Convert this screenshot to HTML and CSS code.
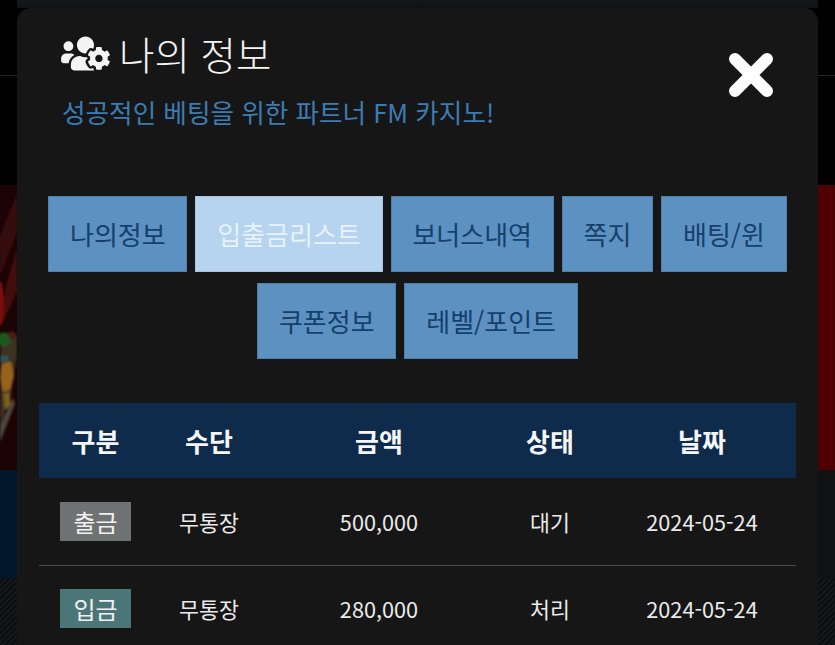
FILE: index.html
```html
<!DOCTYPE html>
<html lang="ko">
<head>
<meta charset="utf-8">
<title>나의 정보</title>
<link rel="stylesheet" href="styles.css">
</head>
<body>
<div class="backdrop">
  <div class="side side-left">
    <div class="band band-top"></div>
    <div class="band band-black"></div>
    <div class="band band-art">
      <svg class="art" viewBox="0 0 17 284" preserveAspectRatio="none" aria-hidden="true">
        <defs>
          <filter id="soft"><feGaussianBlur stdDeviation="0.8"/></filter>
        </defs>
        <path d="M0 0h17v284H0z" fill="#1c0304"/>
        <g filter="url(#soft)">
          <path d="M0 50L17 8v40L0 92z" fill="#360709"/>
          <path d="M6 100L17 62v44L2 140z" fill="#42090b"/>
          <ellipse cx="0" cy="118" rx="4" ry="22" fill="#7c0a0a"/>
          <path d="M0 150h17v20L0 250z" fill="#30231b"/>
          <path d="M2 150h15v18l-6 42-11 26z" fill="#3e3024"/>
          <circle cx="4" cy="154" r="7" fill="#1e5a1c"/>
          <circle cx="12" cy="150" r="4" fill="#4a1a12"/>
          <path d="M0 170h8v6H0z" fill="#2e545c"/>
          <path d="M2 178l9-2 3 14-4 14-7 2-3-14z" fill="#94631a"/>
          <path d="M3 208l6-2 2 14-6 4z" fill="#7c5e1e"/>
          <path d="M0 256L15 218l-2-6L0 240z" fill="#4c463e"/>
        </g>
      </svg>
    </div>
    <div class="band band-blue"></div>
    <div class="band band-hatch"></div>
  </div>
  <div class="side side-right">
    <div class="band band-top"></div>
    <div class="band band-black"></div>
    <div class="band band-red"></div>
    <div class="band band-dark"></div>
    <div class="band band-hatch"></div>
  </div>
</div>

<main class="modal">
  <header class="modal-head">
    <h1 class="title">
      <svg class="title-icon" viewBox="0 0 640 512" aria-hidden="true"><path d="M610.5 341.3c2.6-14.1 2.6-28.5 0-42.6l25.8-14.9c3-1.7 4.3-5.2 3.3-8.5-6.7-21.6-18.2-41.2-33.2-57.4-2.3-2.5-6-3.1-9-1.4l-25.8 14.9c-10.9-9.3-23.4-16.5-36.9-21.3v-29.8c0-3.4-2.4-6.4-5.7-7.1-22.3-5-45-4.8-66.2 0-3.3.7-5.7 3.7-5.7 7.1v29.8c-13.5 4.8-26 12-36.9 21.3l-25.8-14.9c-2.9-1.7-6.7-1.1-9 1.4-15 16.2-26.5 35.8-33.2 57.4-1 3.3.4 6.8 3.3 8.5l25.8 14.9c-2.6 14.1-2.6 28.5 0 42.6l-25.8 14.9c-3 1.7-4.3 5.2-3.3 8.5 6.7 21.6 18.2 41.1 33.2 57.4 2.3 2.5 6 3.1 9 1.4l25.8-14.9c10.9 9.3 23.4 16.5 36.9 21.3v29.8c0 3.4 2.4 6.4 5.7 7.1 22.3 5 45 4.8 66.2 0 3.3-.7 5.7-3.7 5.7-7.1v-29.8c13.5-4.8 26-12 36.9-21.3l25.8 14.9c2.9 1.7 6.7 1.1 9-1.4 15-16.2 26.5-35.8 33.2-57.4 1-3.3-.4-6.8-3.3-8.5l-25.8-14.9zM496 368.5c-26.8 0-48.5-21.8-48.5-48.5s21.8-48.5 48.5-48.5 48.5 21.8 48.5 48.5-21.7 48.5-48.5 48.5zM96 224c35.3 0 64-28.7 64-64s-28.7-64-64-64-64 28.7-64 64 28.7 64 64 64zm224 32c1.9 0 3.7-.5 5.6-.6 8.3-21.7 20.5-42.1 36.3-59.2 7.4-8 17.9-12.6 28.9-12.6 6.9 0 13.7 1.8 19.6 5.3l7.9 4.6c.8-.5 1.6-.9 2.4-1.4 7-14.6 11.2-30.8 11.2-48 0-61.9-50.1-112-112-112S208 82.1 208 144c0 61.9 50.1 112 112 112zm105.2 194.5c-2.3-1.2-4.6-2.6-6.8-3.9-8.2 4.8-15.3 9.8-27.5 9.8-10.9 0-21.4-4.6-28.9-12.6-18.3-19.8-32.3-43.9-40.2-69.6-10.7-34.5 24.9-49.7 25.8-50.3-.1-2.6-.1-5.2 0-7.8l-7.9-4.6c-3.8-2.2-7-5-9.8-8.1-3.3.2-6.5.6-9.8.6-24.6 0-47.6-6-68.5-16h-8.3C179.6 288 128 339.6 128 403.2V432c0 26.5 21.5 48 48 48h255.4c-3.7-6-6.2-12.8-6.2-20.1v-9.4zM173.1 274.6C161.5 263.1 145.6 256 128 256H64c-35.3 0-64 28.7-64 64v32c0 17.7 14.3 32 32 32h65.9c6.3-47.4 34.9-87.3 75.2-109.4z"/></svg>
      <span>나의 정보</span>
    </h1>
    <p class="subtitle">성공적인 베팅을 위한 파트너 FM 카지노!</p>
    <button class="close" type="button" aria-label="닫기">
      <svg viewBox="0 0 46 46" aria-hidden="true"><path d="M7 7l32 32M39 7L7 39"/></svg>
    </button>
  </header>

  <nav class="tabs">
    <a class="tab">나의정보</a>
    <a class="tab tab-active">입출금리스트</a>
    <a class="tab">보너스내역</a>
    <a class="tab">쪽지</a>
    <a class="tab">배팅/윈</a>
    <a class="tab">쿠폰정보</a>
    <a class="tab">레벨/포인트</a>
  </nav>

  <table class="records">
    <colgroup>
      <col class="col-type"><col class="col-method"><col class="col-amount"><col class="col-status"><col class="col-date">
    </colgroup>
    <thead>
      <tr><th>구분</th><th>수단</th><th>금액</th><th>상태</th><th>날짜</th></tr>
    </thead>
    <tbody>
      <tr>
        <td><span class="badge badge-out">출금</span></td>
        <td>무통장</td><td>500,000</td><td>대기</td><td>2024-05-24</td>
      </tr>
      <tr>
        <td><span class="badge badge-in">입금</span></td>
        <td>무통장</td><td>280,000</td><td>처리</td><td>2024-05-24</td>
      </tr>
    </tbody>
  </table>
</main>
</body>
</html>
```

FILE: styles.css
```css
* { box-sizing: border-box; }

html, body {
  margin: 0;
  height: 100%;
  overflow: hidden;
  background: #000;
  font-family: "Noto Sans CJK KR", "Noto Sans", sans-serif;
}

body { position: relative; }

.backdrop {
  position: absolute;
  inset: 0;
  display: grid;
  grid-template-columns: 1fr 1fr;
}

.side { display: flex; flex-direction: column; }

.band-top {
  height: 76px;
  border-bottom: 1px solid #262626;
  background-color: #010101;
}

.side-left .band-top {
  background-image: linear-gradient(#15181d 0, #101216 8px, #010101 8px);
  background-size: calc(100% - 17px) 100%;
  background-position: right top;
  background-repeat: no-repeat;
}

.side-right .band-top {
  background-image: linear-gradient(#14161a 0, #101216 8px, #010101 8px);
  background-size: calc(100% - 17px) 100%;
  background-position: left top;
  background-repeat: no-repeat;
}

.band-black { height: 109px; background: #010101; }
.band-art { height: 285px; }
.art { display: block; width: 17px; height: 100%; }
.band-red { height: 285px; background: linear-gradient(90deg, #4a0000, #5c0202 60%, #4e0000); }
.band-blue { height: 108px; background: linear-gradient(90deg, #01172c, #02223f 70%, #021a33); }
.band-dark { height: 108px; background: #101113; }

.band-hatch {
  flex: 1;
  background: repeating-linear-gradient(135deg, #15171a 0 2px, #0c0d0f 2px 4px);
}

.modal {
  position: absolute;
  left: 17px;
  right: 17px;
  top: 8px;
  bottom: 0;
  padding: 0 22px;
  overflow: hidden;
  background: #161616;
  border-radius: 14px 14px 0 0;
}

.modal-head { position: relative; padding: 20px 0 0 22px; }

.title {
  display: flex;
  align-items: center;
  gap: 9px;
  margin: 0;
  height: 50px;
  color: #f4f4f4;
  font-size: 38.500px;
  font-weight: 300;
  line-height: 50px;
}

.title-icon { width: 49px; height: 39px; fill: #f4f4f4; flex: none; }

.subtitle {
  margin: 14px 0 0 1px;
  height: 40px;
  color: #3d7cb3;
  font-size: 25.600px;
  line-height: 40px;
  white-space: nowrap;
}

.close {
  position: absolute;
  top: 44px;
  right: 22px;
  width: 46px;
  height: 46px;
  padding: 0;
  border: 0;
  background: none;
}

.close svg { display: block; width: 46px; height: 46px; }
.close path { fill: none; stroke: #fff; stroke-width: 12; stroke-linecap: round; }

.tabs {
  display: flex;
  flex-wrap: wrap;
  justify-content: center;
  gap: 11px 8px;
  margin-top: 64px;
}

.tab {
  display: flex;
  align-items: center;
  height: 76px;
  padding: 0 20.800px;
  background: #5c91c1;
  border: 1px solid #4e80ad;
  color: #14406c;
  font-size: 26px;
  line-height: 1;
}

.tab-active {
  background: #b6d4f0;
  border-color: #a8c6e2;
  color: #e8f2fb;
}

.records {
  width: 757px;
  margin-top: 44px;
  border-collapse: collapse;
  table-layout: fixed;
}

.col-type { width: 113px; }
.col-method { width: 114px; }
.col-amount { width: 226px; }
.col-status { width: 116px; }
.col-date { width: 188px; }

.records th {
  height: 75px;
  padding: 0;
  background: #0f2b4c;
  color: #f4f6f8;
  font-size: 26px;
  font-weight: 700;
  text-align: center;
}

.records td {
  height: 87px;
  padding: 0;
  color: #eaeaea;
  font-size: 21.700px;
  text-align: center;
}

.records tbody tr + tr td { border-top: 1px solid #4a4a4a; }

.badge {
  display: inline-block;
  width: 71px;
  height: 39px;
  color: #f0f0f0;
  font-size: 24px;
  line-height: 39px;
}

.badge-out { background: #6e7272; }
.badge-in { background: #4a7678; }
```
